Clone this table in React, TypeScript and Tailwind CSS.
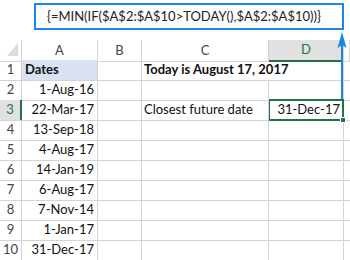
// ── IMPORTS ───────────────────────────────────────────────────────────────────
import React from "react";

// ── CONSTANTS ─────────────────────────────────────────────────────────────────
const COLS = ["A", "B", "C", "D", ""];

const ROWS: { a: string; c?: string; d?: string; head?: boolean }[] = [
  { a: "Dates", c: "Today is August 17, 2017", head: true },
  { a: "1-Aug-16" },
  { a: "22-Mar-17", c: "Closest future date", d: "31-Dec-17" },
  { a: "13-Sep-18" },
  { a: "4-Aug-17" },
  { a: "14-Jan-19" },
  { a: "6-Aug-17" },
  { a: "7-Nov-14" },
  { a: "1-Jan-17" },
  { a: "31-Dec-17" },
];

const GRID = "grid grid-cols-[22px_76px_44px_127px_75px_1fr]";
const FONT = { fontFamily: "Lato, 'Liberation Sans', sans-serif" };

// ── COMPONENT ─────────────────────────────────────────────────────────────────
export default function App() {
  return (
    <div className="relative w-[350px] h-[260px] bg-white overflow-hidden text-[13px] text-[#111]" style={FONT}>
      {/* Formula callout */}
      <div className="h-[40px] pt-[3px] pl-[34px]">
        <div className="w-[310px] h-[27px] border-[2.5px] border-[#1a86ec] flex items-center pl-[11px] whitespace-nowrap text-[#222] text-[13px]">
          {"{=MIN(IF($A$2:$A$10>TODAY(),$A$2:$A$10))}"}
        </div>
      </div>

      {/* Column headers */}
      <div className={`${GRID} h-[20px]`}>
        <div className="border-r border-b border-[#d4d4d4] relative">
          <div className="absolute left-[7px] top-[3px] w-0 h-0 border-l-[11px] border-l-transparent border-b-[13px] border-b-[#dcdcdc]" />
        </div>
        {COLS.map((c, i) => (
          <div
            key={i}
            className={`flex items-center justify-center border-r border-[#d4d4d4] text-[#444] ${
              c === "D" ? "bg-[#e1e1e1] border-b-2 border-b-[#217346] text-[#217346]" : "border-b"
            }`}
          >
            {c}
          </div>
        ))}
      </div>

      {/* Sheet rows */}
      {ROWS.map((r, i) => {
        const sel = i === 2;
        return (
          <div key={i} className={`${GRID} h-[20px]`}>
            <div
              className={`flex items-center justify-center border-b border-[#d4d4d4] ${
                sel ? "bg-[#e1e1e1] text-[#217346] border-r-2 border-r-[#217346]" : "border-r text-[#444]"
              }`}
            >
              {i + 1}
            </div>
            <div
              className={`flex items-center border-r border-b border-[#d4d4d4] whitespace-nowrap ${
                r.head ? "bg-[#d9e1f2] font-bold pl-[3px]" : "justify-end pr-[3px]"
              }`}
            >
              {r.a}
            </div>
            <div className="border-r border-b border-[#d4d4d4]" />
            <div
              className={`flex items-center pl-[2px] border-b border-[#d4d4d4] whitespace-nowrap overflow-visible z-10 ${
                r.head ? "font-bold" : "border-r"
              }`}
            >
              {r.c}
            </div>
            <div className="flex items-center justify-end pr-[3px] border-r border-b border-[#d4d4d4] whitespace-nowrap">
              {r.d}
            </div>
            <div className="border-b border-[#d4d4d4]" />
          </div>
        );
      })}

      {/* Active cell D3 */}
      <div className="absolute left-[268px] top-[99px] w-[76px] h-[22px] border-2 border-[#217346] pointer-events-none" />
      <div className="absolute left-[340px] top-[117px] w-[6px] h-[6px] bg-[#217346] border border-white" />

      {/* Arrow from the cell up to the formula */}
      <svg className="absolute left-[335px] top-[30px]" width="14" height="70" viewBox="0 0 14 70">
        <line x1="7" y1="12" x2="7" y2="69" stroke="#1a86ec" strokeWidth="2" />
        <path d="M7 2 L11.5 18 L7 15 L2.5 18 Z" fill="#1a86ec" />
      </svg>
    </div>
  );
}
